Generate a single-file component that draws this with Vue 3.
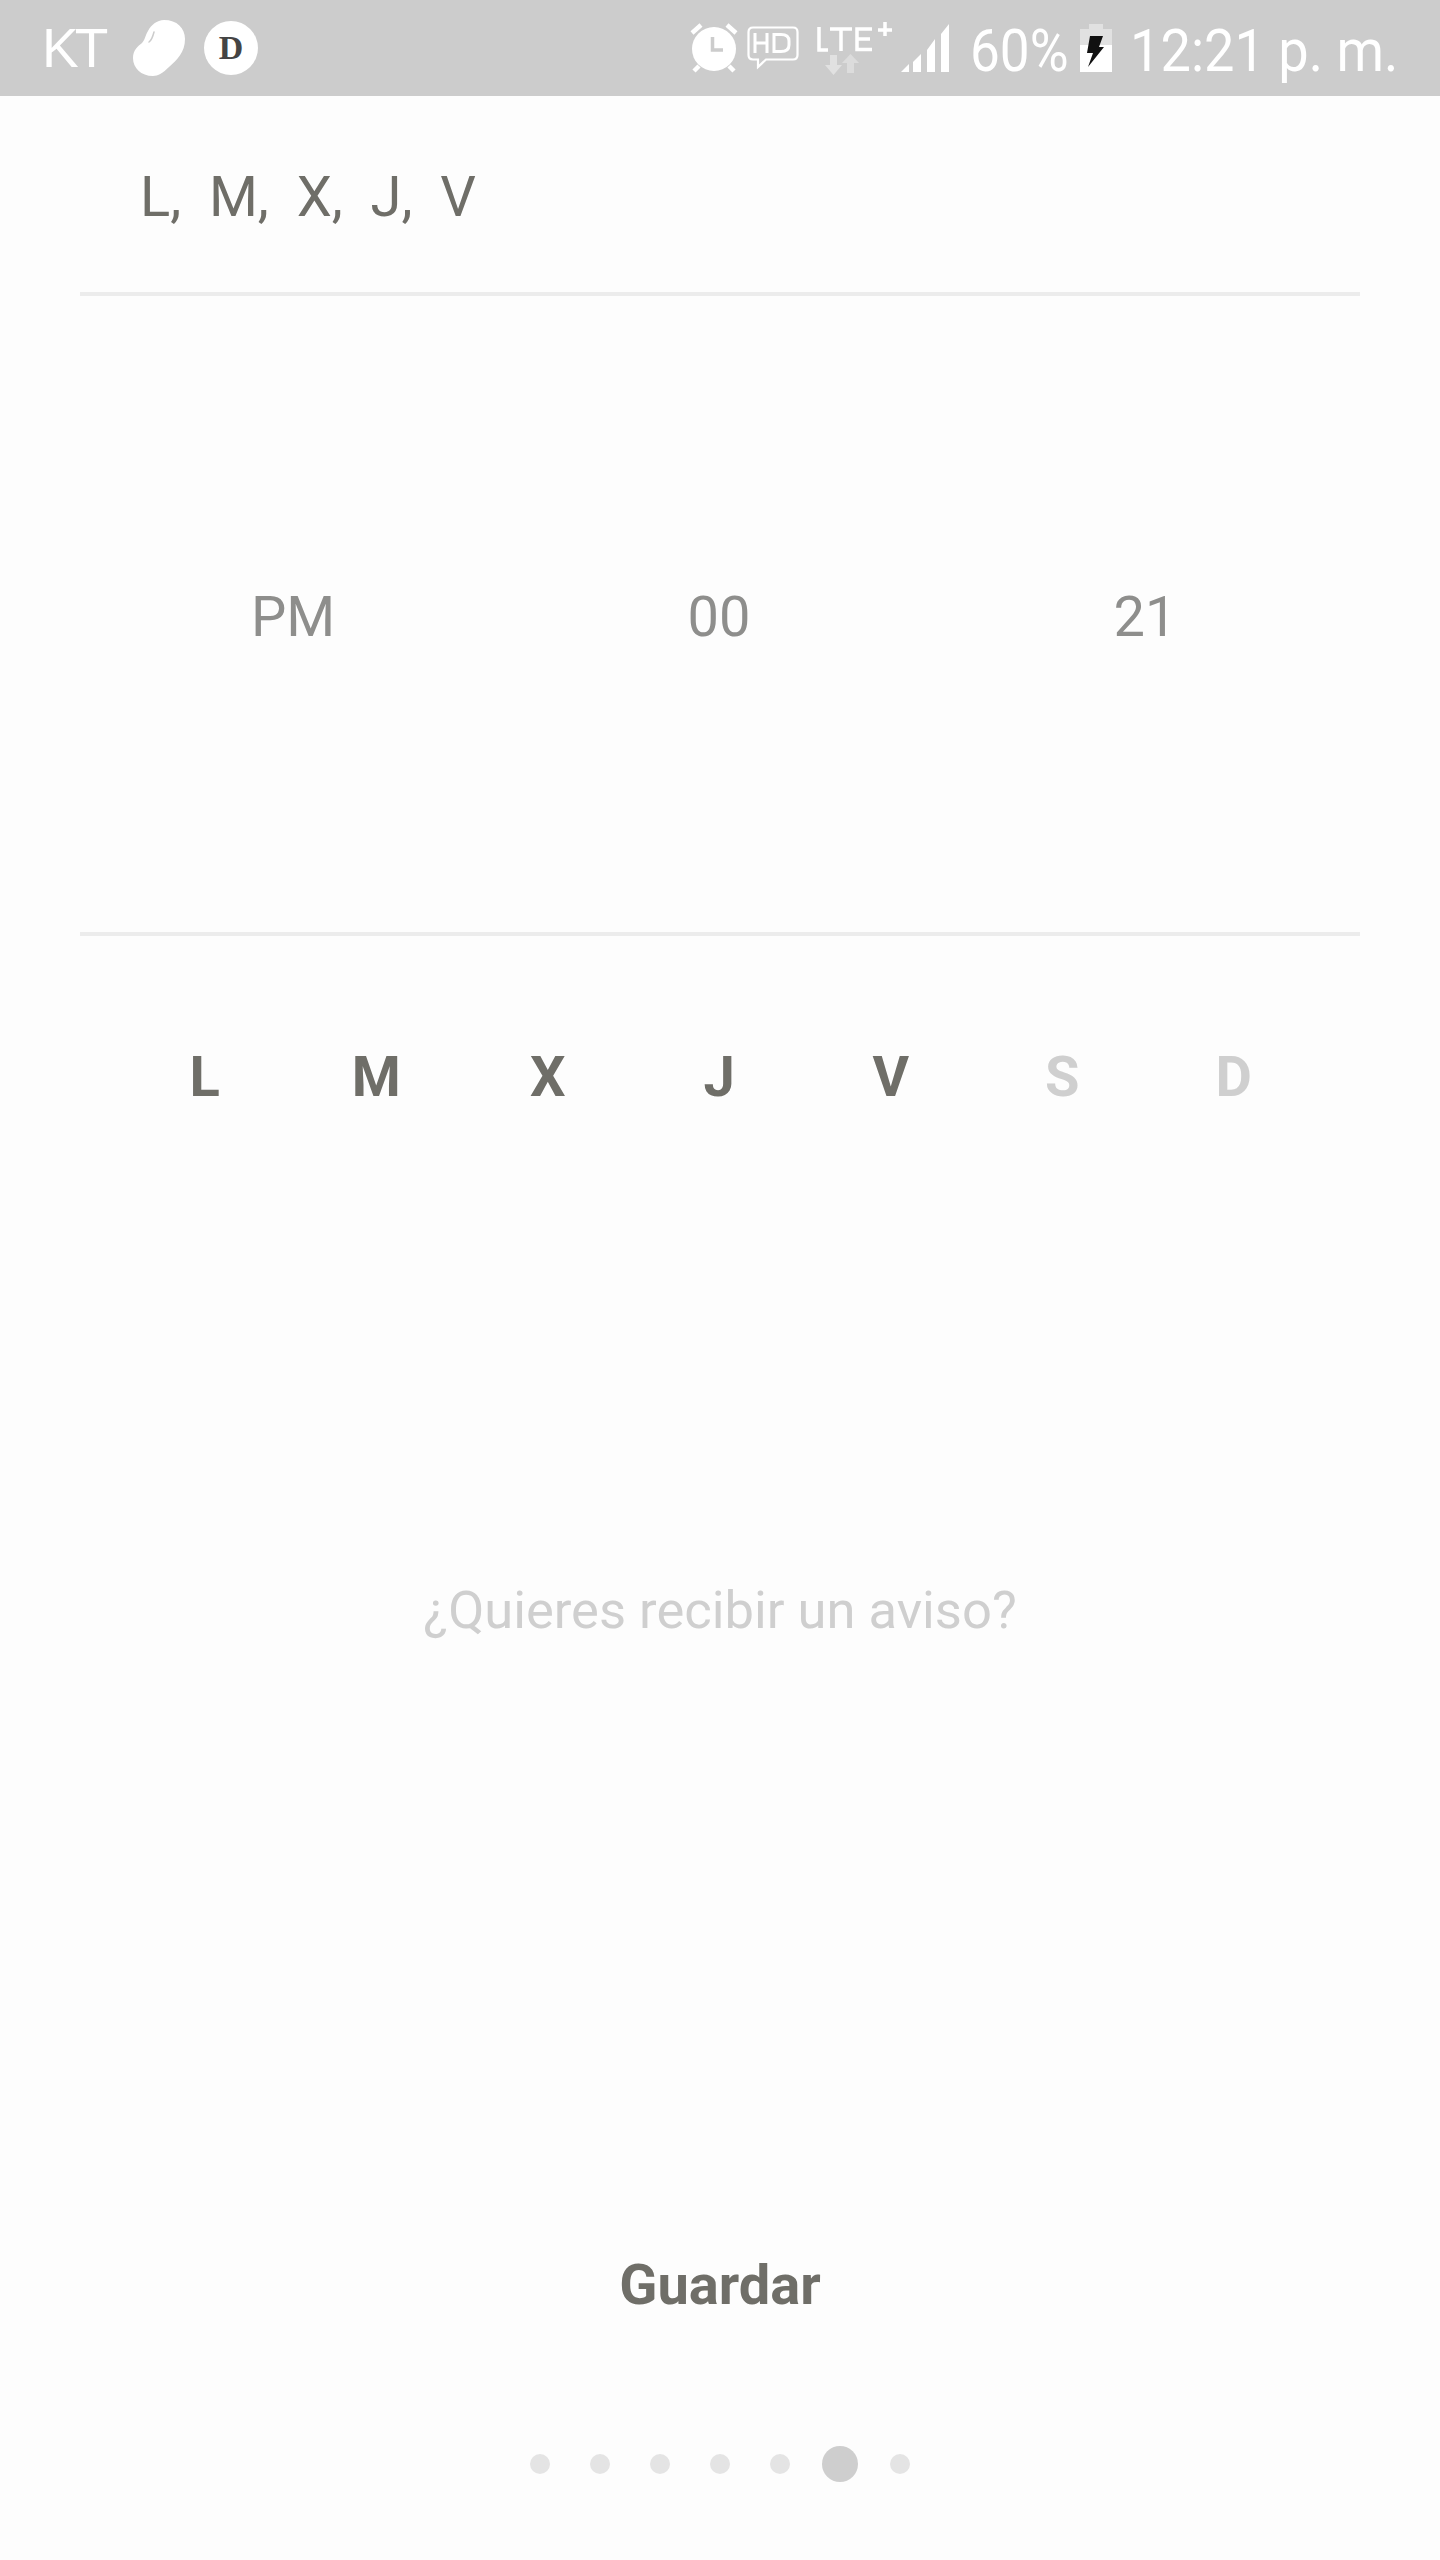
<script setup>
const days = [
  { label: 'L', on: true },
  { label: 'M', on: true },
  { label: 'X', on: true },
  { label: 'J', on: true },
  { label: 'V', on: true },
  { label: 'S', on: false },
  { label: 'D', on: false }
]

const summary = 'L,  M,  X,  J,  V'
const dots = [0, 1, 2, 3, 4, 5, 6]
</script>

<template>
  <div class="screen">
    <header class="status">
      <div class="status-left">
        <span class="carrier">KT</span>
        <svg class="bean" width="52" height="56" viewBox="0 0 52 56">
          <path fill="#fff" d="M31 0C44 0 52 8 52 19C52 32 44 40 36 47C30 53 25 56 20 56C8 56 0 48 0 38C0 30 5 26 9 23C12 20 12 16 15 11C18 5 24 0 31 0Z" />
          <path fill="none" stroke="#ccc" stroke-width="1.5" stroke-linecap="round" d="M16 22C19 20 20 16 21 12" />
        </svg>
        <span class="d-badge">D</span>
      </div>
      <div class="status-right">
        <svg class="alarm" width="48" height="50" viewBox="0 0 48 50">
          <circle cx="24" cy="26" r="22" fill="#fff" />
          <path fill="none" stroke="#fff" stroke-width="4.5" d="M2 10L11 2M46 10L37 2M9 43L4 48M39 43L44 48" />
          <path fill="none" stroke="#ccc" stroke-width="3.5" d="M22.5 14V27H33" />
        </svg>
        <svg class="hd" width="52" height="44" viewBox="0 0 52 44">
          <path fill="none" stroke="#fff" stroke-width="2.2" d="M6 1.5H46Q50.5 1.5 50.5 6V29Q50.5 33.5 46 33.5H19L11 41V33.5H6Q1.5 33.5 1.5 29V6Q1.5 1.5 6 1.5Z" />
          <path fill="none" stroke="#fff" stroke-width="3" d="M8 7V27M20 7V27M8 17H20M27 8.5V25.5H34Q42 25.5 42 19V15Q42 8.5 34 8.5Z" />
        </svg>
        <svg class="lte" width="76" height="54" viewBox="0 0 76 54">
          <path fill="none" stroke="#fff" stroke-width="3.5" d="M3 6V29H12M14 8H36M25 8V30M56 8H41V28.5H56M41 18H54" />
          <path fill="none" stroke="#fff" stroke-width="3.5" d="M62 9H76M69 1V15" />
          <path fill="#e1e1e1" d="M14 34H21V44H26L17.5 54L9 44H14Z" />
          <path fill="#dcdcdc" d="M31 52H38V42H43L34.5 33L26 42H31Z" />
        </svg>
        <svg class="signal" width="48" height="48" viewBox="0 0 48 48">
          <path fill="#fff" d="M0 48L8 40V48ZM12 38L20 30V48H12ZM26 26L34 15V48H26ZM40 10L48 0V48H40Z" />
        </svg>
        <span class="percent">60%</span>
        <svg class="battery" width="32" height="48" viewBox="0 0 32 48">
          <path fill="#e1e1e1" d="M9 0H23V5H32V21H0V5H9Z" />
          <path fill="#fff" d="M0 21H32V48H0Z" />
          <path fill="#111" d="M10 12H23L19 23H24L8 43L13 29H7Z" />
        </svg>
        <span class="clock">12:21 p. m.</span>
      </div>
    </header>

    <main class="content">
      <div class="summary">{{ summary }}</div>

      <div class="picker">
        <span>PM</span>
        <span>00</span>
        <span>21</span>
      </div>

      <div class="days">
        <span v-for="day in days" :key="day.label" class="day" :class="{ off: !day.on }">{{ day.label }}</span>
      </div>

      <p class="notice">¿Quieres recibir un aviso?</p>

      <button class="save">Guardar</button>

      <div class="dots">
        <span v-for="dot in dots" :key="dot" class="dot" :class="{ current: dot === 5 }"></span>
      </div>
    </main>
  </div>
</template>

<style>
html, body {
  margin: 0;
  background: #fdfdfd;
}
</style>

<style scoped>
.screen {
  width: 1440px;
  height: 2560px;
  display: flex;
  flex-direction: column;
  background: #fdfdfd;
  font-family: Roboto, "Liberation Sans", sans-serif;
  overflow: hidden;
}

.status {
  height: 96px;
  flex-shrink: 0;
  background: #ccc;
  display: flex;
  justify-content: space-between;
  align-items: center;
  padding: 0 45px 0 42px;
  color: #fff;
}

.status-left,
.status-right {
  display: flex;
  align-items: center;
}

.carrier {
  font-family: "Liberation Sans", sans-serif;
  font-size: 55px;
  line-height: 96px;
  letter-spacing: -4px;
  width: 91px;
}

.bean {
  margin-right: 19px;
}

.d-badge {
  width: 54px;
  height: 54px;
  border-radius: 50%;
  background: #fff;
  color: #444;
  font-family: "Liberation Serif", serif;
  font-weight: bold;
  font-size: 34px;
  line-height: 54px;
  text-align: center;
}

.alarm {
  margin-right: 9px;
}

.hd {
  margin-right: 17px;
}

.lte {
  margin-right: 9px;
}

.signal {
  margin-right: 21px;
}

.percent,
.clock {
  display: inline-block;
  margin-top: 6px;
  font-size: 60px;
  line-height: 96px;
  white-space: nowrap;
  transform: scaleX(0.885);
  transform-origin: left center;
}

.percent {
  width: 97px;
}

.battery {
  margin: 0 18px 0 13px;
}

.clock {
  width: 265px;
  transform: scaleX(0.903);
}

.content {
  flex: 1;
  display: flex;
  flex-direction: column;
  padding: 0 80px;
}

.summary {
  height: 200px;
  box-sizing: border-box;
  border-bottom: 4px solid #ececec;
  padding: 71px 0 0 60px;
  font-size: 56px;
  line-height: 60px;
  color: #6f6e68;
  white-space: pre;
}

.picker {
  height: 640px;
  box-sizing: border-box;
  border-bottom: 4px solid #ececec;
  display: grid;
  grid-template-columns: 426px 426px 426px;
  align-items: center;
  padding-top: 6px;
  font-size: 56px;
  color: #8e8e8c;
  text-align: center;
}

.days {
  display: grid;
  grid-template-columns: repeat(7, 171.5px);
  margin: 106px 0 0 39px;
  font-size: 56px;
  line-height: 70px;
  font-weight: 700;
  color: #6f6e68;
  text-align: center;
}

.day.off {
  color: #cfcfcf;
}

.notice {
  margin: 463px 0 0;
  font-size: 52.5px;
  line-height: 70px;
  color: #cfcfcf;
  text-align: center;
}

.save {
  margin: 605px auto 0;
  padding: 0;
  border: 0;
  background: none;
  font: 700 56px/70px Roboto, sans-serif;
  color: #6f6e68;
}

.dots {
  margin-top: 126px;
  display: flex;
  justify-content: center;
  align-items: center;
}

.dot {
  width: 20px;
  height: 20px;
  margin: 0 20px;
  border-radius: 50%;
  background: #e4e4e4;
}

.dot.current {
  width: 36px;
  height: 36px;
  margin: 0 12px;
  background: #cecece;
}
</style>
